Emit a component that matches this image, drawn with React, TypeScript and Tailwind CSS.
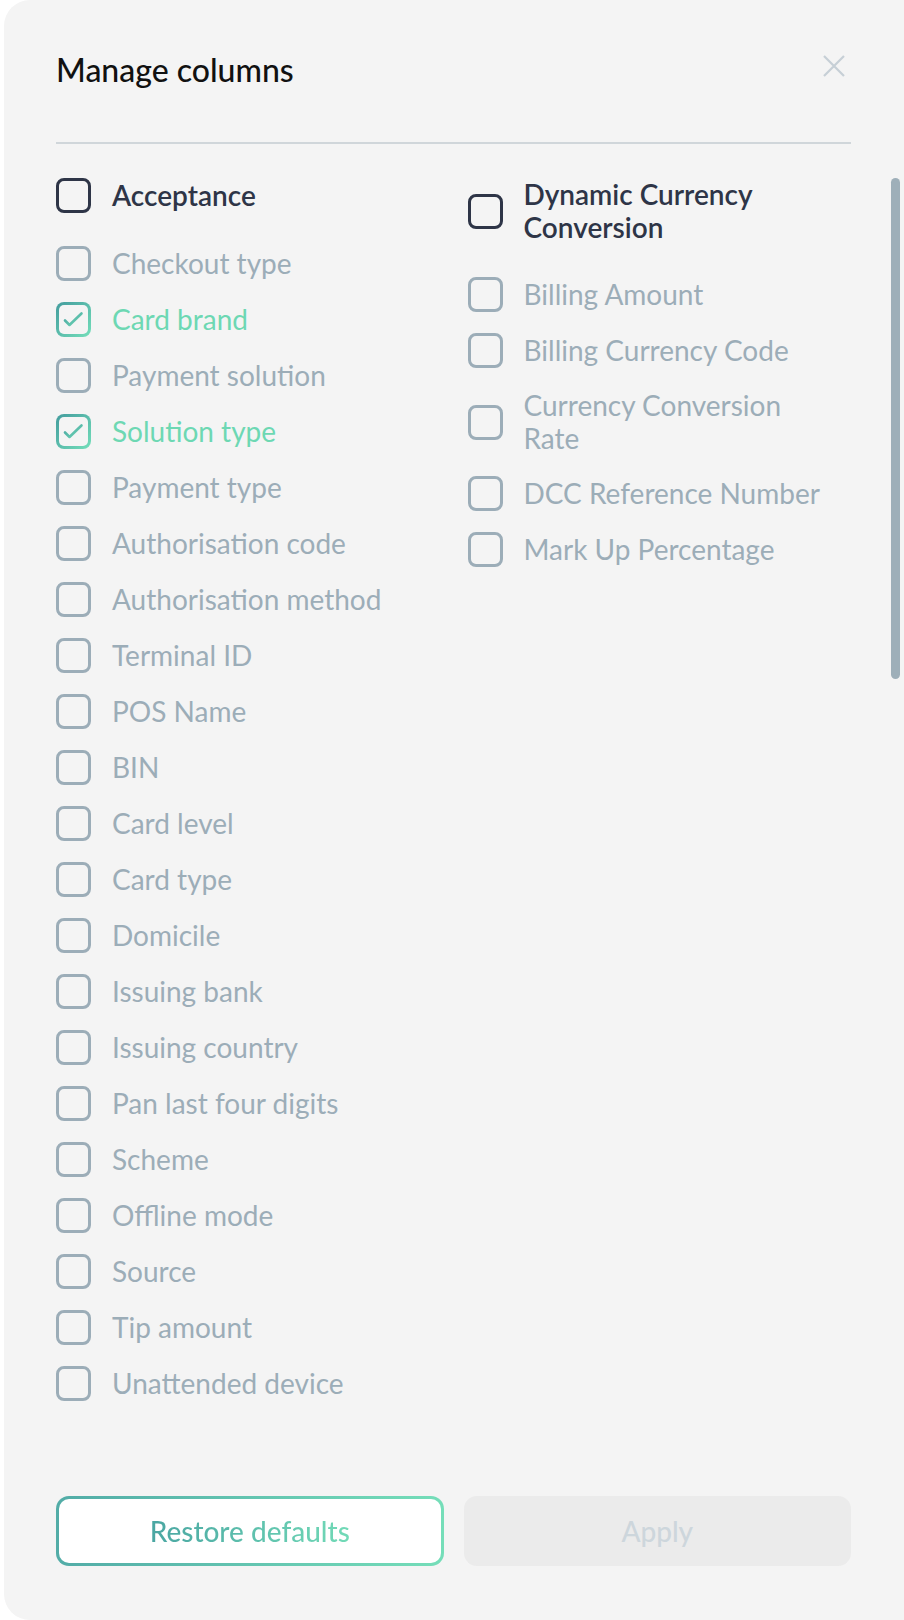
import { useState } from 'react'

type Column = { label: string; checked?: boolean }

const acceptance: Column[] = [
	{ label: 'Checkout type' },
	{ label: 'Card brand', checked: true },
	{ label: 'Payment solution' },
	{ label: 'Solution type', checked: true },
	{ label: 'Payment type' },
	{ label: 'Authorisation code' },
	{ label: 'Authorisation method' },
	{ label: 'Terminal ID' },
	{ label: 'POS Name' },
	{ label: 'BIN' },
	{ label: 'Card level' },
	{ label: 'Card type' },
	{ label: 'Domicile' },
	{ label: 'Issuing bank' },
	{ label: 'Issuing country' },
	{ label: 'Pan last four digits' },
	{ label: 'Scheme' },
	{ label: 'Offline mode' },
	{ label: 'Source' },
	{ label: 'Tip amount' },
	{ label: 'Unattended device' },
]

const dcc: Column[] = [
	{ label: 'Billing Amount' },
	{ label: 'Billing Currency Code' },
	{ label: 'Currency Conversion Rate' },
	{ label: 'DCC Reference Number' },
	{ label: 'Mark Up Percentage' },
]

function Box({ checked, dark }: { checked?: boolean; dark?: boolean }) {
	if (checked) {
		return (
			<div className="h-[35px] w-[35px] shrink-0 rounded-[8px] bg-linear-to-br from-[#439c9d] to-[#74dfba] p-[3px]">
				<div className="flex h-full w-full items-center justify-center rounded-[5px] bg-[#f4f4f4]">
					<svg width="29" height="29" viewBox="0 0 29 29" fill="none">
						<defs>
							<linearGradient id="chk" x1="0" y1="0" x2="1" y2="1">
								<stop offset="0" stopColor="#47a2a0" />
								<stop offset="1" stopColor="#6fd8b6" />
							</linearGradient>
						</defs>
						<path d="M6 15.5l4.5 4.5 12-11.5" stroke="url(#chk)" strokeWidth="2.6" strokeLinecap="round" strokeLinejoin="round" />
					</svg>
				</div>
			</div>
		)
	}
	return (
		<div
			className={
				dark
					? 'h-[35px] w-[35px] shrink-0 rounded-[8px] border-[3.5px] border-[#2e3547]'
					: 'h-[35px] w-[35px] shrink-0 rounded-[8px] border-[3px] border-[#9cadb8]'
			}
		/>
	)
}

function Group({ title, items }: { title: string; items: Column[] }) {
	const [state, setState] = useState(items)

	return (
		<div className="flex flex-col">
			<label className="flex items-center gap-[21px]">
				<Box dark />
				<span className="max-w-[300px] text-[28px] font-semibold leading-[33px] text-[#2e3547]">{title}</span>
			</label>
			<div className="mt-[33px] flex flex-col gap-[21px]">
				{state.map((c, i) => (
					<label
						key={c.label}
						className="flex cursor-pointer items-center gap-[21px]"
						onClick={() => setState(state.map((s, j) => (j === i ? { ...s, checked: !s.checked } : s)))}
					>
						<Box checked={c.checked} />
						<span
							className={
								c.checked
									? 'max-w-[300px] text-[28px] leading-[33px] text-[#6dd8b3]'
									: 'max-w-[300px] text-[28px] leading-[33px] text-[#9cadb8]'
							}
						>
							{c.label}
						</span>
					</label>
				))}
			</div>
		</div>
	)
}

export default function App() {
	return (
		<div className="min-h-[1620px] bg-white font-['Lato','Liberation_Sans',sans-serif]">
			<div className="relative ml-[4px] flex h-[1620px] flex-col rounded-l-[26px] bg-[#f4f4f4] pl-[52px] pr-[53px]">
				<div className="flex items-start justify-between pt-[50px]">
					<h2 className="text-[32px] font-medium leading-[40px] text-[#111111]">Manage columns</h2>
					<button className="mr-[6px] mt-[5px] text-[#c6cfd6]">
						<svg width="22" height="22" viewBox="0 0 22 22" fill="none" stroke="currentColor" strokeWidth="2.2">
							<path d="M1 1l20 20M21 1L1 21" />
						</svg>
					</button>
				</div>

				<div className="mt-[52px] h-[2px] bg-[#d0d6da]" />

				<div className="grid flex-1 grid-cols-2 items-start gap-x-7 pt-[34px]">
					<Group title="Acceptance" items={acceptance} />
					<Group title="Dynamic Currency Conversion" items={dcc} />
				</div>

				<div className="absolute right-[4px] top-[178px] h-[501px] w-[9px] rounded-full bg-[#9eafb9]" />

				<div className="grid grid-cols-2 gap-5 pb-[54px]">
					<button className="h-[70px] rounded-[13px] bg-linear-to-r from-[#52aca7] to-[#75deb9] p-[3px]">
						<span className="flex h-full w-full items-center justify-center rounded-[10px] bg-white">
							<span className="bg-linear-to-r from-[#4aa6a2] to-[#72dab7] bg-clip-text text-[28px] font-medium text-transparent">
								Restore defaults
							</span>
						</span>
					</button>
					<button className="h-[70px] rounded-[13px] bg-[#ebebeb] text-[28px] font-medium text-[#cdd6dc]">Apply</button>
				</div>
			</div>
		</div>
	)
}
